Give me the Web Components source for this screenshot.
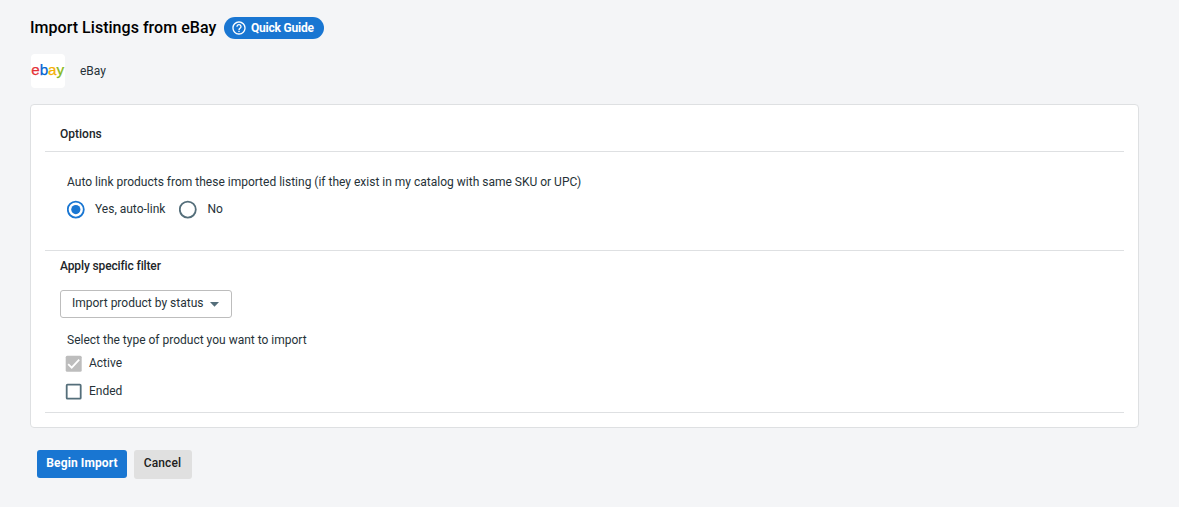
<!DOCTYPE html>
<html lang="en">
<head>
<meta charset="utf-8">
<title>Import Listings from eBay</title>
<style>
    body {
        margin: 0;
        background: #f4f5f7;
        color: #263238;
        font: 12px/20px Roboto, "Liberation Sans", sans-serif;
    }
</style>
</head>
<body>
<import-page></import-page>
<script>
class QuickGuide extends HTMLElement {
    constructor() {
        super();
        this.attachShadow({ mode: 'open' });
        this.shadowRoot.innerHTML = `
            <style>
                :host {
                    display: flex;
                    align-items: center;
                    box-sizing: border-box;
                    width: 100px;
                    height: 22px;
                    padding-left: 7px;
                    gap: 4px;
                    border-radius: 11px;
                    background: #1976d2;
                    color: #fff;
                    font-weight: 700;
                    letter-spacing: -0.22px;
                    white-space: nowrap;
                }
                svg {
                    flex: none;
                }
            </style>
            <svg width="16" height="16" viewBox="0 0 24 24" fill="#fff">
                <path d="M11 18h2v-2h-2v2zm1-16C6.48 2 2 6.48 2 12s4.48 10 10 10 10-4.48 10-10S17.52 2 12 2zm0 18c-4.41 0-8-3.59-8-8s3.59-8 8-8 8 3.59 8 8-3.59 8-8 8zm0-14c-2.21 0-4 1.79-4 4h2c0-1.1.9-2 2-2s2 .9 2 2c0 2-3 1.75-3 5h2c0-2.250 3-2.500 3-5 0-2.210-1.790-4-4-4z"/>
            </svg>
            <span><slot></slot></span>
        `;
    }
}

class ChannelLogo extends HTMLElement {
    constructor() {
        super();
        this.attachShadow({ mode: 'open' });
        this.shadowRoot.innerHTML = `
            <style>
                :host {
                    display: block;
                    width: 34px;
                    height: 34px;
                    border-radius: 4px;
                    background: #fff;
                }
                svg {
                    display: block;
                }
                text {
                    font: 14.5px "Liberation Sans", sans-serif;
                    stroke-width: 0.25;
                }
            </style>
            <svg width="34" height="34" viewBox="0 0 34 34">
                <text x="0.2" y="21" textLength="33" lengthAdjust="spacingAndGlyphs"><tspan fill="#e53238" stroke="#e53238">e</tspan><tspan fill="#0064d2" stroke="#0064d2">b</tspan><tspan fill="#f5af02" stroke="#f5af02">a</tspan><tspan fill="#86b817" stroke="#86b817">y</tspan></text>
            </svg>
        `;
    }
}

class OptionsCard extends HTMLElement {
    constructor() {
        super();
        this.attachShadow({ mode: 'open' });
        this.shadowRoot.innerHTML = `
            <style>
                :host {
                    display: block;
                    box-sizing: border-box;
                    height: 324px;
                    padding: 0 14px;
                    border: 1px solid #dee0e2;
                    border-radius: 4px;
                    background: #fff;
                }
            </style>
            <slot></slot>
        `;
    }
}

class CardSection extends HTMLElement {
    constructor() {
        super();
        this.attachShadow({ mode: 'open' });
        this.shadowRoot.innerHTML = `
            <style>
                :host {
                    display: block;
                    box-sizing: border-box;
                    border-bottom: 1px solid #dee0e2;
                    padding-left: 15px;
                }
                h2 {
                    margin: 0;
                    font-size: 12px;
                    font-weight: 500;
                    letter-spacing: var(--heading-spacing, 0);
                    color: #212529;
                }
            </style>
            <h2>${this.getAttribute('heading') || ''}</h2>
            <slot></slot>
        `;
        if (!this.hasAttribute('heading')) {
            this.shadowRoot.querySelector('h2').remove();
        }
    }
}

class RadioOption extends HTMLElement {
    constructor() {
        super();
        this.attachShadow({ mode: 'open' });
        const checked = this.hasAttribute('checked');
        const color = checked ? '#1976d2' : '#546e7a';
        this.shadowRoot.innerHTML = `
            <style>
                :host {
                    display: flex;
                    gap: 9px;
                    height: 20px;
                }
                svg {
                    flex: none;
                    margin-top: 1px;
                }
            </style>
            <svg width="19" height="19" viewBox="0 0 19 19">
                <circle cx="8.8" cy="9.6" r="8" fill="none" stroke="${color}" stroke-width="1.8"/>
                ${checked ? `<circle cx="8.8" cy="9.6" r="4.6" fill="${color}"/>` : ''}
            </svg>
            <span><slot></slot></span>
        `;
    }
}

class CheckOption extends HTMLElement {
    constructor() {
        super();
        this.attachShadow({ mode: 'open' });
        const box = this.hasAttribute('checked')
            ? `<rect x="0.7" y="0.7" width="16" height="16" rx="1.5" fill="#bdbdbd"/>
               <path d="M3.2 9.2l3.5 3.5L14.2 4.7" fill="none" stroke="#fff" stroke-width="1.8"/>`
            : '<rect x="1.7" y="1.7" width="14" height="14" rx="0.8" fill="none" stroke="#546e7a" stroke-width="1.8"/>';
        this.shadowRoot.innerHTML = `
            <style>
                :host {
                    display: flex;
                    gap: 7px;
                    height: 20px;
                }
                svg {
                    flex: none;
                    margin-top: 2px;
                }
            </style>
            <svg width="17" height="17" viewBox="0 0 17 17">${box}</svg>
            <span><slot></slot></span>
        `;
    }
}

class FilterSelect extends HTMLElement {
    constructor() {
        super();
        this.attachShadow({ mode: 'open' });
        this.shadowRoot.innerHTML = `
            <style>
                :host {
                    display: flex;
                    align-items: center;
                    box-sizing: border-box;
                    width: 172px;
                    height: 28px;
                    padding: 0 0 2px 11px;
                    gap: 7px;
                    border: 1px solid #bdbdbd;
                    border-radius: 3px;
                    white-space: nowrap;
                }
                svg {
                    margin-top: 3px;
                }
            </style>
            <span><slot></slot></span>
            <svg width="9" height="5" viewBox="0 0 9 5"><path d="M0 0h9L4.5 4.7z" fill="#546e7a"/></svg>
        `;
    }
}

class ActionButton extends HTMLElement {
    constructor() {
        super();
        this.attachShadow({ mode: 'open' });
        this.shadowRoot.innerHTML = `
            <style>
                button {
                    display: block;
                    width: 58px;
                    height: 29px;
                    padding: 0 1px 3px 0;
                    border: 0;
                    border-radius: 3px;
                    background: #e0e0e0;
                    color: #212121;
                    font: inherit;
                    font-weight: 500;
                    letter-spacing: 0.1px;
                    white-space: nowrap;
                }
                :host {
                    display: block;
                }
                :host([primary]) button {
                    width: 90px;
                    height: 28px;
                    padding: 0 0 2px;
                    background: #1976d2;
                    color: #fff;
                    font-weight: 700;
                }
            </style>
            <button type="button"><slot></slot></button>
        `;
    }
}

class ImportPage extends HTMLElement {
    constructor() {
        super();
        this.attachShadow({ mode: 'open' });
        this.shadowRoot.innerHTML = `
            <style>
                :host {
                    display: block;
                    padding: 17px 40px 0 30px;
                }
                header {
                    display: flex;
                    align-items: center;
                    gap: 8px;
                    height: 22px;
                }
                h1 {
                    width: 186px;
                    margin: 0;
                    font-size: 16px;
                    font-weight: 500;
                    letter-spacing: 0.03px;
                    color: #000;
                    white-space: nowrap;
                }
                .channel {
                    display: flex;
                    align-items: center;
                    gap: 15px;
                    padding: 15px 0 16px 1px;
                }
                p {
                    margin: 0 0 0 7px;
                }
                .options {
                    height: 47px;
                    padding-top: 19px;
                }
                .link {
                    height: 99px;
                    padding-top: 20px;
                }
                .filter {
                    --heading-spacing: -0.13px;
                    height: 162px;
                    padding-top: 5px;
                }
                .radios {
                    display: flex;
                    gap: 14px;
                    margin: 7px 0 0 7px;
                }
                filter-select {
                    margin: 14px 0 12px;
                }
                check-option {
                    margin: 3px 0 8px 5px;
                }
                footer {
                    display: flex;
                    align-items: flex-start;
                    gap: 7px;
                    padding: 22px 0 0 7px;
                }
            </style>
            <header>
                <h1>Import Listings from eBay</h1>
                <quick-guide>Quick Guide</quick-guide>
            </header>
            <div class="channel">
                <channel-logo></channel-logo>
                <span>eBay</span>
            </div>
            <options-card>
                <card-section class="options" heading="Options"></card-section>
                <card-section class="link">
                    <p>Auto link products from these imported listing (if they exist in my catalog with same SKU or UPC)</p>
                    <div class="radios">
                        <radio-option checked>Yes, auto-link</radio-option>
                        <radio-option>No</radio-option>
                    </div>
                </card-section>
                <card-section class="filter" heading="Apply specific filter">
                    <filter-select>Import product by status</filter-select>
                    <p>Select the type of product you want to import</p>
                    <check-option checked>Active</check-option>
                    <check-option>Ended</check-option>
                </card-section>
            </options-card>
            <footer>
                <action-button primary>Begin Import</action-button>
                <action-button>Cancel</action-button>
            </footer>
        `;
    }
}

customElements.define('quick-guide', QuickGuide);
customElements.define('channel-logo', ChannelLogo);
customElements.define('options-card', OptionsCard);
customElements.define('card-section', CardSection);
customElements.define('radio-option', RadioOption);
customElements.define('check-option', CheckOption);
customElements.define('filter-select', FilterSelect);
customElements.define('action-button', ActionButton);
customElements.define('import-page', ImportPage);
</script>
</body>
</html>
